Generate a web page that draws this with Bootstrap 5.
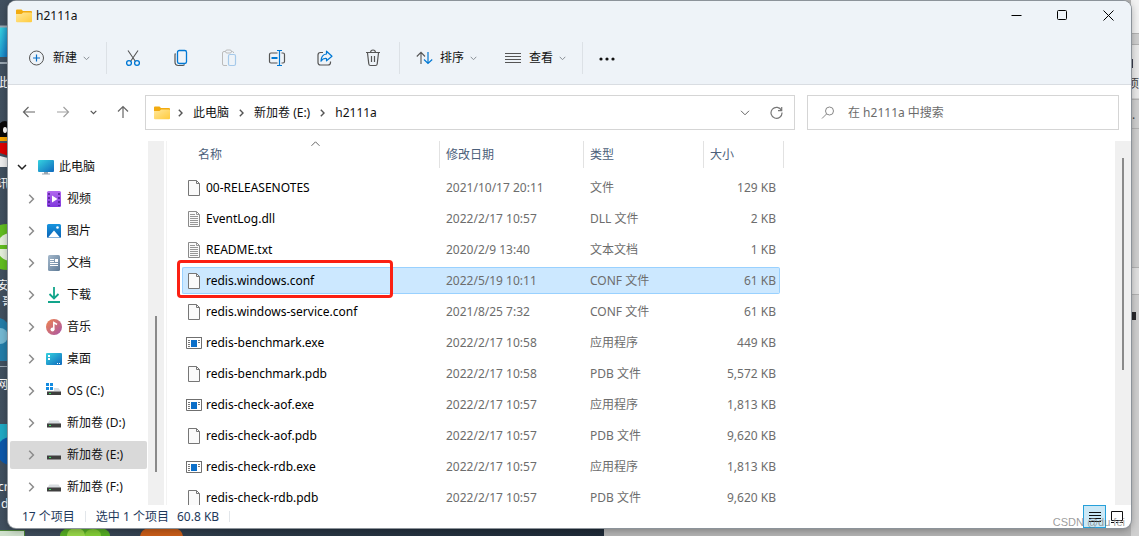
<!DOCTYPE html>
<html lang="zh-CN">
<head>
<meta charset="utf-8">
<meta name="viewport" content="width=device-width, initial-scale=1">
<title>h2111a</title>
<link href="https://cdn.jsdelivr.net/npm/bootstrap@5.3.0/dist/css/bootstrap.min.css" rel="stylesheet">
<style>
body{font:12px/16px "Noto Sans","Noto Sans CJK SC",sans-serif;color:#111;background:#b4b4b4;overflow:hidden}
svg{display:block;flex:none}
button,.crumb{background:none;border:0;padding:0;color:inherit;text-decoration:none}
/* desktop behind the window */
.desk{z-index:-1;overflow:hidden}
.desk-wall{position:absolute;left:0;top:0;bottom:0;width:604px;background:linear-gradient(90deg,#41505f,#2b3947 40%,#1f2b38)}
.desk-left,.desk-bottom,.desk-right{position:absolute}
.desk-left{left:0;top:0}
.desk-bottom{left:0;bottom:0}
.desk-right{right:0;top:0}
/* window */
.explorer{height:calc(100vh - 9px);margin:1px 8px 8px;background:#fff;border-radius:8px;box-shadow:0 0 0 1px #8c939a,0 2px 8px #0005}
.titlebar{height:29px;padding-left:8px}
.top-area{background:#eef3f8;border-bottom:1px solid #d9dde2}
.caption-btn{width:46px;height:29px}
.toolbar{height:54px;padding:2px 0 0 20px}
.tool-text{display:flex;align-items:center}
.tool-text .label{margin:0 6px 0 7px}
.tool-icon{width:48px;height:32px;display:flex;align-items:center;justify-content:center}
.divider{width:1px;height:32px;background:#dce1e6}
.ms-2px{margin-left:2px}.ms-16{margin-left:16px}.ms-20{margin-left:20px}.ms-28{margin-left:28px}
.navrow{height:56px;padding:10px 12px 12px 14px}
.field-box{border:1px solid #d5d5d5;height:35px;background:#fff}
.address{flex:629 1 0;min-width:0;padding:1px 11px 0 8px}
.address .crumb{margin:0 10px}
.searchbox{flex:297 1 0;min-width:0;margin-left:12px;padding:1px 0 0 13px}
.searchbox input{border:0;outline:0;background:none;min-width:0;padding:0;margin-left:13px;color:#666}
.searchbox input::placeholder{color:#6b6b6b;opacity:1}
.navbtns{width:123px}
.navbtns button{display:flex;justify-content:center}
/* side tree */
.tree-pane{width:139px;padding:12px 0 0 2px}
.tree-item{height:28px;margin-bottom:4px;border-radius:2px;padding-left:18px;color:#111;text-decoration:none;display:flex;align-items:center;white-space:nowrap}
.tree-item.root{padding-left:7px}
.tree-item .tw{margin-right:11px}
.tree-item .ti{margin-right:5px}
.tree-item.chosen{background:#d9d9d9}
.track{width:16px;background:#f0f0f0;flex:none}
.tree-track{margin-left:1px;padding-top:175px}
.list-track{padding-top:17px}
.thumb{width:2px;background:#8a8a8a;margin-left:7px}
.list-pane{border-left:1px solid #f3f3f3;margin-left:2px;padding-left:15px}
/* file table */
.files{width:598px;table-layout:fixed;border-collapse:separate;border-spacing:0 4px;margin-top:-4px}
.files th{height:29px;padding:0 0 2px 6px;font-weight:400;color:#4c607a;position:relative}
.files th:first-child{padding-left:16px}
.files th::after{content:"";position:absolute;right:0;top:0;width:1px;height:27px;background:#e2e2e2}
.files th:last-child::after{right:-4px}
.files td{height:27px;padding:0 3px 0 6px;border:1px solid transparent;border-width:1px 0;color:#6d6d6d;white-space:nowrap}
.files td:first-child{padding-left:3px;border-left-width:1px;border-radius:2px 0 0 2px;color:#000;position:relative}
.files td:last-child{border-right-width:1px;border-radius:0 2px 2px 0;text-align:right}
.files tr.chosen td{background:#cce8ff;border-color:#99d1ff}
.c-name{width:258px}.c-date{width:144px}.c-type{width:120px}.c-size{width:76px}
.fname{display:flex;align-items:center;gap:4px}
.sort-mark{position:absolute;left:129px;top:0}
.callout{position:absolute;left:-6px;top:-8px;width:216px;height:38px;border:3px solid #fb2013;border-radius:4px}
/* status bar */
.status{height:23px;padding-left:14px;color:#1e395b}
.status .bar{width:1px;height:11px;background:#e2e6ea;margin:0 10px}
.view-on{width:23px;height:23px;border:1px solid #26a0da;background:#cbe8f6;display:flex;align-items:center;justify-content:center}
.view-off{width:22px;height:23px;display:flex;align-items:center;justify-content:center;margin-right:3px}
.watermark{position:absolute;right:14px;bottom:6px;font:11px/16px "Liberation Sans",sans-serif;color:#777b;pointer-events:none}
</style>
</head>
<body>
<svg width="0" height="0" class="position-absolute" aria-hidden="true">
<defs>
<linearGradient id="gf" x1="0" y1="0" x2="1" y2="1"><stop offset="0" stop-color="#ffe79b"/><stop offset="1" stop-color="#ffcb3c"/></linearGradient>
<linearGradient id="gb" x1="0" y1="0" x2="1" y2="1"><stop offset="0" stop-color="#35d3e0"/><stop offset="1" stop-color="#0f68bd"/></linearGradient>
<linearGradient id="gp" x1="0" y1="0" x2="0" y2="1"><stop offset="0" stop-color="#b269ef"/><stop offset="1" stop-color="#8038dd"/></linearGradient>
<linearGradient id="gi" x1="0" y1="0" x2="0" y2="1"><stop offset="0" stop-color="#1795df"/><stop offset="1" stop-color="#0b62b4"/></linearGradient>
<linearGradient id="gd" x1="0" y1="0" x2="1" y2="1"><stop offset="0" stop-color="#a6bacd"/><stop offset="1" stop-color="#5d7995"/></linearGradient>
<linearGradient id="gm" x1="0" y1="0" x2="1" y2="1"><stop offset="0" stop-color="#f0854e"/><stop offset="1" stop-color="#a855a8"/></linearGradient>
<symbol id="folder" viewBox="0 0 16 14"><path d="M0 2.500V1.500Q0 .5 1 .5h4.500L7 2h8q1 0 1 1v4H0z" fill="#f2ab10"/><path d="M0 5h5.500l1.700-1.400H15q1 0 1 1V12.300q0 1-1 1H1q-1 0-1-1z" fill="url(#gf)"/></symbol>
<symbol id="cdown" viewBox="0 0 7 5"><path d="M.7 .8 3.500 3.700 6.300 .8" fill="none" stroke="#8a9096"/></symbol>
<symbol id="cright" viewBox="0 0 5 8"><path d="M.8 .8 4 4 .8 7.200" fill="none" stroke="#555" stroke-width="1.400"/></symbol>
<symbol id="tright" viewBox="0 0 7 10"><path d="M1.200 .8 5.400 5 1.200 9.200" fill="none" stroke="#8b8b8b" stroke-width="1.500"/></symbol>
<symbol id="doc" viewBox="0 0 16 16"><path d="M2.500 .5h8l3 3v12h-11z" fill="#fafafa" stroke="#767676"/><path d="M10.500.5v3h3" fill="none" stroke="#767676"/></symbol>
<symbol id="txt" viewBox="0 0 16 16"><path d="M2.500 .5h8l3 3v12h-11z" fill="#fafafa" stroke="#8a8a8a"/><path d="M10.500.5v3h3M4 3.500h5M4 5.500h8M4 7.500h8M4 9.500h8M4 11.500h8M4 13.500h8" fill="none" stroke="#969696"/></symbol>
<symbol id="exe" viewBox="0 0 16 12"><path d="M.5 .5h15v11H.5z" fill="#fff" stroke="#6f6f6f"/><path d="M0 .5h16" stroke="#6f6f6f"/><path d="M5 3h6v7H5z" fill="#0b6fc9"/><path d="M2 3.500h2M2 5.500h2M2 7.500h2M2 9.500h2M12 3.500h2M12 5.500h2" stroke="#777"/></symbol>
<symbol id="drive" viewBox="0 0 16 16"><path d="M3.500 5.500h9L15 9H1z" fill="#d8dce0"/><path d="M1 8.500h14v4H1z" fill="#3f3f3f"/><path d="M3 10h2v1H3z" fill="#3be05c"/></symbol>
</defs>
</svg>

<div class="desk position-absolute top-0 start-0 w-100 h-100" aria-hidden="true">
  <div class="desk-wall"></div>
  <svg class="desk-left" width="24" height="536" font-size="12" fill="#fff">
    <rect y="27" width="9" height="30" fill="url(#gb)"/><path d="M0 26.500h9M0 63h9" stroke="#9aa7b2" stroke-width="2"/>
    <text x="-3" y="87">此</text>
    <ellipse cx="5" cy="131" rx="8" ry="10" fill="#080808"/><ellipse cx="5" cy="130" rx="2" ry="3" fill="#fff"/><path d="M0 137h9v4H0z" fill="#f5a400"/><path d="M0 143h9v13l-9-3z" fill="#dc0000"/><path d="M0 156l8 2v9H0z" fill="#eee"/>
    <text x="-3" y="188">讯</text>
    <circle cx="7" cy="247" r="23" fill="#62bd20"/><circle cx="11" cy="247" r="14" fill="#e5efdc"/><path d="M0 245h9v4H0z" fill="#62bd20"/>
    <text x="-3" y="290">安</text><text x="2" y="306">哥</text>
    <path d="M0 318q9 2 9 14v29H0z" fill="#247da8"/><circle cx="0" cy="336" r="8" fill="#75b9d3"/><path d="M0 366.500h9" stroke="#9aa7b2"/>
    <text x="-4" y="389">网</text>
    <path d="M0 424h9v20H0z" fill="#1fa9c4"/><circle cx="11" cy="451" r="14" fill="#0c58ab"/>
    <text x="-2" y="491">cr</text><text x="1" y="508">d</text>
  </svg>
  <svg class="desk-bottom" width="604" height="9"><path d="M0 3h24v6H0z" fill="#cfe0cc"/><path d="M0 3.500h24.500V9" fill="none" stroke="#4c8736"/><ellipse cx="85" cy="8" rx="25" ry="10" fill="#55ad24"/><ellipse cx="76" cy="8" rx="9" ry="7" fill="#98d848"/><ellipse cx="93" cy="8" rx="8" ry="6" fill="#83ce35"/><rect x="140" y="1" width="43" height="20" rx="9" fill="#ca5d18"/></svg>
  <svg class="desk-right" width="8" height="536" font-size="12" fill="#444"><path d="M0 0h8v536H0z" fill="#cfcfcf"/><path d="M0 0h8v33H0z" fill="#f2f2f2"/><path d="M0 45h8v53H0z" fill="#e9e9e9"/><path d="M0 33.500h8M0 44.500h8M0 99.500h8M0 128.500h8M0 267.500h8M0 294.500h8" stroke="#b3b3b3"/><path d="M0 59h2v9H0z" fill="#3b3d4d"/><text x="-4" y="88">项</text><text x="1" y="119">.</text><path d="M0 268h8v26H0z" fill="#e0e0e0"/><path d="M0 312h5v8H0z" fill="#28282c"/></svg>
</div>

<main class="explorer d-flex flex-column overflow-hidden position-relative">
  <header class="top-area">
    <div class="titlebar d-flex align-items-center">
      <svg width="16" height="14"><use href="#folder"/></svg>
      <span class="ms-1">h2111a</span>
      <div class="ms-auto d-flex">
        <button class="caption-btn" aria-label="最小化"><svg class="mx-auto" width="11" height="11"><path d="M.5 5.500h10" stroke="#000"/></svg></button>
        <button class="caption-btn" aria-label="最大化"><svg class="mx-auto" width="11" height="11"><rect x=".5" y=".5" width="9" height="9" rx="1" fill="none" stroke="#000"/></svg></button>
        <button class="caption-btn" aria-label="关闭"><svg class="mx-auto" width="11" height="11"><path d="M.5.5l10 10M10.500.5l-10 10" stroke="#000"/></svg></button>
      </div>
    </div>
    <div class="toolbar d-flex align-items-center" role="toolbar">
      <button class="tool-text"><svg width="18" height="18" viewBox="0 0 18 18" fill="none"><circle cx="8.500" cy="9" r="7" stroke="#555"/><path d="M5 9h7M8.500 5.500v7" stroke="#0a6fc7" stroke-width="1.200"/></svg><span class="label">新建</span><svg width="7" height="5"><use href="#cdown"/></svg></button>
      <span class="divider ms-16"></span>
      <button class="tool-icon ms-2px" aria-label="剪切"><svg width="16" height="18" viewBox="0 0 16 18" fill="none"><path d="M3 1.500l7.500 11M13 1.500L5.500 12.500" stroke="#555" stroke-width="1.100"/><circle cx="4" cy="14" r="2.400" stroke="#0078d4" stroke-width="1.300"/><circle cx="12" cy="14" r="2.400" stroke="#0078d4" stroke-width="1.300"/></svg></button>
      <button class="tool-icon" aria-label="复制"><svg width="16" height="18" viewBox="0 0 16 18" fill="none"><path d="M2.500 4.500Q2 5 2 6v7q0 3.500 3.500 3.500h4q1.500 0 2-1" stroke="#555" stroke-width="1.200"/><rect x="4.500" y="1.500" width="9" height="13" rx="1.800" stroke="#0078d4" stroke-width="1.300"/></svg></button>
      <button class="tool-icon" aria-label="粘贴" disabled><svg width="16" height="18" viewBox="0 0 16 18" fill="none"><path d="M4.500 2.500H3Q1.500 2.500 1.500 4v11q0 1.500 1.500 1.500h3M10 2.500h1.500q1 0 1.200 1.500" stroke="#bbb"/><rect x="4.500" y="1" width="6" height="3" rx="1.500" stroke="#bbb"/><rect x="7.500" y="5.500" width="7" height="11" rx="1.500" stroke="#a5c9ea" stroke-width="1.200"/></svg></button>
      <button class="tool-icon" aria-label="重命名"><svg width="18" height="18" viewBox="0 0 18 18" fill="none"><path d="M9.500 4H3Q1.500 4 1.500 5.500v7Q1.500 14 3 14h6.500M13.500 4H15q1.500 0 1.500 1.500v7Q16.500 14 15 14h-1.500" stroke="#555" stroke-width="1.200"/><path d="M9 1.500h5M9 16.500h5M11.500 1.500v15" stroke="#0078d4" stroke-width="1.200"/><path d="M3.500 9h6" stroke="#0078d4" stroke-width="2"/></svg></button>
      <button class="tool-icon" aria-label="共享"><svg width="16" height="18" viewBox="0 0 16 18" fill="none"><path d="M6 3.500H3.500Q1 3.500 1 6v7.500Q1 16 3.500 16H11q2.500 0 2.500-2.500v-1" stroke="#555" stroke-width="1.200"/><path d="M9.500 2.200L15 7.200l-5.500 4.600V9.500Q6 9 4 12.200 4.200 5.500 9.500 5z" stroke="#0078d4" stroke-width="1.200" stroke-linejoin="round"/></svg></button>
      <button class="tool-icon" aria-label="删除"><svg width="16" height="18" viewBox="0 0 16 18" fill="none"><path d="M1 3.500h14M5.500 3.500q.2-2.500 2.500-2.500t2.500 2.500M2.500 4l1.300 11q.2 1.500 1.700 1.500h5q1.500 0 1.700-1.500L13.500 4M6.500 7v6M9.500 7v6" stroke="#555" stroke-width="1.200"/></svg></button>
      <span class="divider ms-2px"></span>
      <button class="tool-text ms-16"><svg width="17" height="14" viewBox="0 0 17 14" fill="none"><path d="M5 13V1.500M.8 5.500L5 1.300l4 4.200" stroke="#555" stroke-width="1.100"/><path d="M12 1v11.500M8 8.500l4 4 4.200-4" stroke="#0078d4" stroke-width="1.200"/></svg><span class="label">排序</span><svg width="7" height="5"><use href="#cdown"/></svg></button>
      <button class="tool-text ms-28"><svg width="17" height="14"><path d="M0 2.500h16M0 5.500h16M0 8.500h16M0 11.500h16" stroke="#555"/></svg><span class="label">查看</span><svg width="7" height="5"><use href="#cdown"/></svg></button>
      <span class="divider ms-16"></span>
      <button class="ms-16" aria-label="更多"><svg width="17" height="6" fill="#111"><circle cx="2" cy="4" r="1.600"/><circle cx="8" cy="4" r="1.600"/><circle cx="14" cy="4" r="1.600"/></svg></button>
    </div>
  </header>

  <nav class="navrow d-flex align-items-center">
    <div class="navbtns d-flex align-items-center flex-shrink-0">
      <button aria-label="后退"><svg width="14" height="12"><path d="M13 6H1.500M6.500 1l-5 5 5 5" fill="none" stroke="#666" stroke-width="1.200"/></svg></button>
      <button class="ms-20" aria-label="前进"><svg width="14" height="12"><path d="M1 6h11.500M7.500 1l5 5-5 5" fill="none" stroke="#a0a0a0" stroke-width="1.200"/></svg></button>
      <button class="ms-20" aria-label="最近"><svg width="7" height="5"><path d="M.7 .8 3.500 3.700 6.300 .8" fill="none" stroke="#555" stroke-width="1.200"/></svg></button>
      <button class="ms-20" aria-label="向上"><svg width="12" height="14"><path d="M6 13V1.500M1 6.500l5-5 5 5" fill="none" stroke="#666" stroke-width="1.200"/></svg></button>
    </div>
    <div class="field-box address d-flex align-items-center">
      <svg width="16" height="14"><use href="#folder"/></svg>
      <svg class="ms-2" width="5" height="8"><use href="#cright"/></svg>
      <a class="crumb" href="#">此电脑</a><svg width="5" height="8"><use href="#cright"/></svg>
      <a class="crumb" href="#">新加卷 (E:)</a><svg width="5" height="8"><use href="#cright"/></svg>
      <a class="crumb" href="#">h2111a</a>
      <button class="ms-auto" aria-label="展开"><svg width="10" height="6"><path d="M1 .8l4 4 4-4" fill="none" stroke="#666"/></svg></button>
      <button class="ms-20" aria-label="刷新"><svg width="13" height="13"><path d="M11.500 4.500A5.500 5.500 0 1 0 12 6.500M11.700 1v3.700H8" fill="none" stroke="#777" stroke-width="1.200"/></svg></button>
    </div>
    <label class="field-box searchbox d-flex align-items-center">
      <svg width="14" height="14"><circle cx="8.500" cy="5" r="4" fill="none" stroke="#888"/><path d="M5.500 8L1 12.500" stroke="#888"/></svg>
      <input class="flex-grow-1" type="search" placeholder="在 h2111a 中搜索" aria-label="搜索">
    </label>
  </nav>

  <div class="d-flex flex-grow-1 overflow-hidden">
    <nav class="tree-pane flex-shrink-0">
      <a href="#" class="tree-item root"><svg class="tw" width="10" height="7"><path d="M1 1l4 4 4-4" fill="none" stroke="#222" stroke-width="1.500"/></svg><svg class="ti" width="16" height="16"><rect y="1" width="16" height="12" rx="1" fill="url(#gb)"/><path d="M6 13h4v2H6zM4 14.500h8v1H4z" fill="#9aa5af"/></svg>此电脑</a>
      <a href="#" class="tree-item"><svg class="tw" width="7" height="10"><use href="#tright"/></svg><svg class="ti" width="16" height="16"><rect x="1" width="14" height="16" rx="1.500" fill="url(#gp)"/><path d="M6 4.500v7L11.500 8z" fill="#fff"/><path d="M3 2v13M13 2v13" stroke="#4c1a91" stroke-width="1.500" stroke-dasharray="2 2"/></svg>视频</a>
      <a href="#" class="tree-item"><svg class="tw" width="7" height="10"><use href="#tright"/></svg><svg class="ti" width="16" height="16"><rect x="1" y="1" width="14" height="14" rx="1.500" fill="url(#gi)"/><path d="M2 14.500l6-7 6 7z" fill="#fff"/><circle cx="11.500" cy="4.500" r="1.300" fill="#fff"/></svg>图片</a>
      <a href="#" class="tree-item"><svg class="tw" width="7" height="10"><use href="#tright"/></svg><svg class="ti" width="16" height="16"><rect x="2" width="12" height="16" rx="1.500" fill="url(#gd)"/><path d="M4 4.500h4M4 6.500h4M4 8.500h8M4 10.500h8" stroke="#fff"/><path d="M9 4h3v3H9z" fill="#fff"/></svg>文档</a>
      <a href="#" class="tree-item"><svg class="tw" width="7" height="10"><use href="#tright"/></svg><svg class="ti" width="16" height="16"><path d="M8 0v11M3.500 7L8 11.500 12.500 7M2 15h12" fill="none" stroke="#12a58b" stroke-width="1.800"/></svg>下载</a>
      <a href="#" class="tree-item"><svg class="tw" width="7" height="10"><use href="#tright"/></svg><svg class="ti" width="16" height="16"><circle cx="8" cy="8" r="8" fill="url(#gm)"/><circle cx="6.500" cy="10.500" r="2" fill="#fff"/><path d="M7.800 10.500V3.500L11 5.500" fill="none" stroke="#fff" stroke-width="1.500"/></svg>音乐</a>
      <a href="#" class="tree-item"><svg class="tw" width="7" height="10"><use href="#tright"/></svg><svg class="ti" width="16" height="16"><rect y="2" width="16" height="12" rx="1" fill="url(#gb)"/><path d="M2 4h2v2H2zM2 7h2v2H2zM11 12h1v1h-1zM13 12h1v1h-1z" fill="#fff"/></svg>桌面</a>
      <a href="#" class="tree-item"><svg class="tw" width="7" height="10"><use href="#tright"/></svg><svg class="ti" width="16" height="16"><path d="M0 0h3v3H0zM4 0h3v3H4zM0 4h3v3H0zM4 4h3v3H4z" fill="#138be0"/><path d="M8 5h4.500L15 8.500H1.500L2.500 8H8z" fill="#d8dce0"/><path d="M1 8.500h14V12H1z" fill="#3f3f3f"/><path d="M3 10h2v1H3z" fill="#3be05c"/></svg>OS (C:)</a>
      <a href="#" class="tree-item"><svg class="tw" width="7" height="10"><use href="#tright"/></svg><svg class="ti" width="16" height="16"><use href="#drive"/></svg>新加卷 (D:)</a>
      <a href="#" class="tree-item chosen"><svg class="tw" width="7" height="10"><use href="#tright"/></svg><svg class="ti" width="16" height="16"><use href="#drive"/></svg>新加卷 (E:)</a>
      <a href="#" class="tree-item"><svg class="tw" width="7" height="10"><use href="#tright"/></svg><svg class="ti" width="16" height="16"><use href="#drive"/></svg>新加卷 (F:)</a>
    </nav>
    <div class="track tree-track"><div class="thumb" style="height:156px"></div></div>
    <section class="list-pane flex-grow-1 overflow-hidden">
      <table class="files">
        <colgroup><col class="c-name"><col class="c-date"><col class="c-type"><col class="c-size"></colgroup>
        <thead><tr><th scope="col">名称<svg class="sort-mark" width="9" height="6"><path d="M.5 4.800l4-4 4 4" fill="none" stroke="#666"/></svg></th><th scope="col">修改日期</th><th scope="col">类型</th><th scope="col">大小</th></tr></thead>
        <tbody>
          <tr><td><div class="fname"><svg width="16" height="16"><use href="#doc"/></svg>00-RELEASENOTES</div></td><td>2021/10/17 20:11</td><td>文件</td><td>129 KB</td></tr>
          <tr><td><div class="fname"><svg width="16" height="16"><use href="#txt"/></svg>EventLog.dll</div></td><td>2022/2/17 10:57</td><td>DLL 文件</td><td>2 KB</td></tr>
          <tr><td><div class="fname"><svg width="16" height="16"><use href="#txt"/></svg>README.txt</div></td><td>2020/2/9 13:40</td><td>文本文档</td><td>1 KB</td></tr>
          <tr class="chosen"><td><div class="fname"><svg width="16" height="16"><use href="#doc"/></svg>redis.windows.conf</div><span class="callout"></span></td><td>2022/5/19 10:11</td><td>CONF 文件</td><td>61 KB</td></tr>
          <tr><td><div class="fname"><svg width="16" height="16"><use href="#doc"/></svg>redis.windows-service.conf</div></td><td>2021/8/25 7:32</td><td>CONF 文件</td><td>61 KB</td></tr>
          <tr><td><div class="fname"><svg width="16" height="12"><use href="#exe"/></svg>redis-benchmark.exe</div></td><td>2022/2/17 10:58</td><td>应用程序</td><td>449 KB</td></tr>
          <tr><td><div class="fname"><svg width="16" height="16"><use href="#doc"/></svg>redis-benchmark.pdb</div></td><td>2022/2/17 10:58</td><td>PDB 文件</td><td>5,572 KB</td></tr>
          <tr><td><div class="fname"><svg width="16" height="12"><use href="#exe"/></svg>redis-check-aof.exe</div></td><td>2022/2/17 10:57</td><td>应用程序</td><td>1,813 KB</td></tr>
          <tr><td><div class="fname"><svg width="16" height="16"><use href="#doc"/></svg>redis-check-aof.pdb</div></td><td>2022/2/17 10:57</td><td>PDB 文件</td><td>9,620 KB</td></tr>
          <tr><td><div class="fname"><svg width="16" height="12"><use href="#exe"/></svg>redis-check-rdb.exe</div></td><td>2022/2/17 10:57</td><td>应用程序</td><td>1,813 KB</td></tr>
          <tr><td><div class="fname"><svg width="16" height="16"><use href="#doc"/></svg>redis-check-rdb.pdb</div></td><td>2022/2/17 10:57</td><td>PDB 文件</td><td>9,620 KB</td></tr>
        </tbody>
      </table>
    </section>
    <div class="track list-track"><div class="thumb" style="height:212px"></div></div>
  </div>

  <footer class="status d-flex align-items-center flex-shrink-0">
    <span>17 个项目</span><span class="bar"></span><span>选中 1 个项目</span><span class="ms-2">60.8 KB</span><span class="bar"></span>
    <button class="view-on ms-auto" aria-label="详细信息"><svg width="12" height="11"><path d="M0 1.500h12M0 4.500h12M0 7.500h12M0 10.500h12" stroke="#111"/></svg></button>
    <button class="view-off" aria-label="大图标"><svg width="12" height="12"><path d="M.5.500h11v9H.5zM0 11.500h3M5 11.500h2M9 11.500h3" fill="none" stroke="#111"/></svg></button>
  </footer>
</main>
<div class="watermark">CSDN @du fei</div>
<script src="https://cdn.jsdelivr.net/npm/bootstrap@5.3.0/dist/js/bootstrap.bundle.min.js"></script>
</body>
</html>
